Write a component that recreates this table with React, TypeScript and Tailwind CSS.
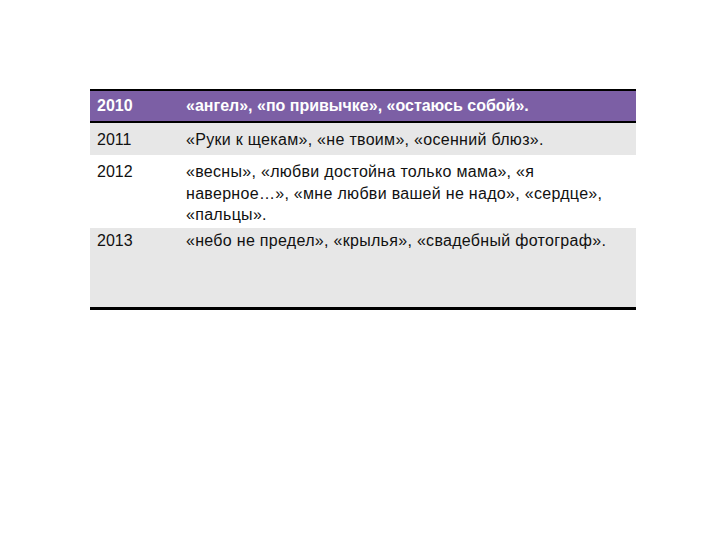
const rows = [
  {
    year: '2011',
    lines: ['«Руки к щекам», «не твоим», «осенний блюз».'],
    bg: 'bg-[#e7e7e7]',
    h: 'h-[32px]',
    pt: 'pt-[6px]',
  },
  {
    year: '2012',
    lines: [
      '«весны», «любви достойна только мама», «я',
      'наверное…», «мне любви вашей не надо», «сердце»,',
      '«пальцы».',
    ],
    bg: 'bg-white',
    h: 'h-[73px]',
    pt: 'pt-[6px]',
  },
  {
    year: '2013',
    lines: ['«небо не предел», «крылья», «свадебный фотограф».'],
    bg: 'bg-[#e7e7e7]',
    h: 'h-[79px]',
    pt: 'pt-[2px]',
  },
];

export default function App() {
  return (
    <div className="w-[720px] h-[540px] bg-white pt-[89px] pl-[90px]" style={{ fontFamily: '"Liberation Sans", Arial, sans-serif' }}>
      <div className="w-[546px] border-t-2 border-b-[3px] border-black">
        <div className="grid grid-cols-[89px_1fr] h-[32px] items-center bg-[#7c5fa5] text-white font-bold text-[16px] border-b-2 border-black">
          <div className="pl-[7px]">2010</div>
          <div className="pl-[7px]">«ангел», «по привычке», «остаюсь собой».</div>
        </div>
        {rows.map((r) => (
          <div key={r.year} className={`grid grid-cols-[89px_1fr] ${r.bg} ${r.h} ${r.pt} text-[16px] leading-[21.5px] text-[#111]`}>
            <div className="pl-[7px]">{r.year}</div>
            <div className="pl-[7px] whitespace-nowrap tracking-[0.3px]">
              {r.lines.map((l) => (
                <div key={l}>{l}</div>
              ))}
            </div>
          </div>
        ))}
      </div>
    </div>
  );
}
